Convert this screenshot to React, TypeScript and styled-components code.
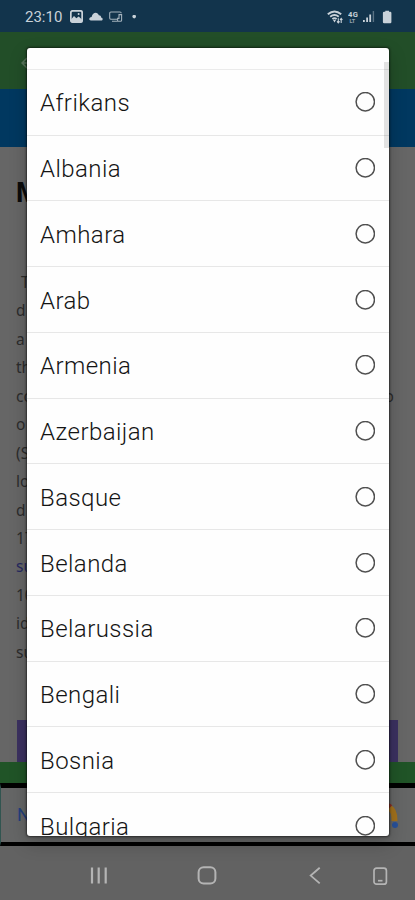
import React from 'react';
import styled, { createGlobalStyle } from 'styled-components';

const GlobalStyle = createGlobalStyle`
  * { box-sizing: border-box; }
  body { margin: 0; background: #666; font-family: Roboto, sans-serif; }
`;

const Screen = styled.div`
  position: relative;
  width: 415px;
  height: 900px;
  overflow: hidden;
  display: flex;
  flex-direction: column;
  background: #666;
`;

const StatusBar = styled.header`
  flex: none;
  height: 32px;
  padding: 0 21px 0 25px;
  display: flex;
  align-items: center;
  justify-content: space-between;
  background: #12344c;
  color: #c9d2d9;
`;

const StatusGroup = styled.div<{ $gap: number }>`
  display: flex;
  align-items: center;
  gap: ${(p) => p.$gap}px;
  padding-top: 1px;
`;

const Clock = styled.span`
  font-size: 15px;
  line-height: 18px;
  width: 39px;
  white-space: nowrap;
  padding-top: 1px;
`;

const AppBar = styled.div`
  flex: none;
  height: 57px;
  padding: 22px 0 0 21px;
  background: #224e28;
`;

const TabBar = styled.div`
  flex: none;
  height: 58px;
  background: #013860;
`;

const Article = styled.main`
  flex: none;
  height: 573px;
  padding: 29px 16px 0;
  overflow: hidden;
  color: #1d1d1d;
`;

const Heading = styled.h1`
  margin: 0 0 58px;
  font-size: 27px;
  line-height: 34px;
  color: #0b0b0b;
`;

const Line = styled.div<{ $link?: boolean; $indent?: boolean }>`
  display: flex;
  justify-content: space-between;
  height: 28.45px;
  padding-left: ${(p) => (p.$indent ? 5 : 0)}px;
  padding-right: 5px;
  font: 15.5px/28.45px 'Noto Sans', sans-serif;
  color: ${(p) => (p.$link ? '#252960' : '#2c2c2c')};
`;

const Banner = styled.div`
  flex: none;
  height: 42px;
  margin: 0 17px;
  background: #3b3160;
`;

const Strip = styled.div`
  flex: none;
  height: 21px;
  background: #205427;
`;

const Ad = styled.div`
  flex: none;
  height: 63px;
  padding: 0 16px 0 16px;
  display: flex;
  align-items: center;
  justify-content: space-between;
  border-top: 5px solid #000;
  border-bottom: 4px solid #000;
  background: #656666;
  border-left: 1px solid #315550;
  color: #243f7c;
  font-size: 18.5px;
`;

const NavBar = styled.nav`
  flex: none;
  height: 54px;
  padding: 5px 27px 0 89px;
  display: flex;
  align-items: center;
  background: #626262;
  color: #b4b4b4;
  svg { display: block; }
`;

const NavSlot = styled.div<{ $width: number }>`
  width: ${(p) => p.$width}px;
  flex: none;
`;

const Dialog = styled.section`
  position: absolute;
  left: 27px;
  top: 48px;
  width: 362px;
  height: 788px;
  overflow: hidden;
  border-radius: 3px;
  background: #fefefe;
  box-shadow: 0 0 2px 1px rgba(0, 0, 0, 0.5), 0 7px 18px rgba(0, 0, 0, 0.23);
`;

const ListTop = styled.div`
  height: 21.9px;
  border-bottom: 1.5px solid #ebebeb;
`;

const Option = styled.label`
  height: 65.75px;
  padding: 0 14px 0 13px;
  display: flex;
  align-items: center;
  justify-content: space-between;
  border-bottom: 1.5px solid #e7e7e7;
  color: #141414;
  font-size: 24px;
  font-weight: 350;
  line-height: 30px;
  letter-spacing: 0.45px;
`;

const OptionName = styled.span`
  padding-top: 2px;
`;

const Radio = styled.svg`
  display: block;
  width: 20px;
  height: 20px;
  fill: none;
  stroke: #505050;
  stroke-width: 1.5;
`;

const ScrollThumb = styled.div`
  position: absolute;
  right: 0;
  top: 14px;
  width: 5px;
  height: 86px;
  background: rgba(0, 0, 0, 0.11);
`;

const languages = ['Afrikans', 'Albania', 'Amhara', 'Arab', 'Armenia', 'Azerbaijan', 'Basque', 'Belanda', 'Belarussia', 'Bengali', 'Bosnia', 'Bulgaria'];
const lines = ['T', 'd', 'a', 'th', 'co', 'o', '(S', 'lo', 'd', '17', 'su', '10', 'id', 'su'];

export default function App() {
  return (
    <>
      <GlobalStyle />
      <Screen>
        <StatusBar>
          <StatusGroup $gap={6}>
            <Clock>23:10</Clock>
            <svg width="13" height="13" viewBox="0 0 13 13">
              <rect x=".8" y=".8" width="11.4" height="11.4" rx="2" fill="#12344c" stroke="currentColor" strokeWidth="1.8" />
              <path d="M1 9.5 4 6l2.4 2.2L8.6 6.5 12 9.5V12H1z" fill="currentColor" />
              <circle cx="8.6" cy="4" r="1" fill="currentColor" />
            </svg>
            <svg width="14" height="9" viewBox="0 0 14 9">
              <path d="M1.9 8.6C-.6 8.6-.2 5.1 2.6 5 3.8-.4 8.9-.2 9.8 3.3c2 0 2.3 1.3 2.3 2.2 2.1.3 2 3.1 0 3.1z" fill="currentColor" />
            </svg>
            <svg width="14" height="12" viewBox="0 0 14 12" fill="none" stroke="currentColor" strokeWidth="1.1" opacity=".8">
              <path d="M8 8.2H1.8A1.2 1.2 0 0 1 .7 7V2.2A1.2 1.2 0 0 1 1.9 1H11a1.2 1.2 0 0 1 1.2 1.2M3 10.2h5" />
              <path d="M10 3.6h2.6v5.6q0 1-1 1H8.6V7.4H10z" />
            </svg>
            <svg width="14" height="4" viewBox="0 0 14 4">
              <circle cx="5.2" cy="1.6" r="1.8" fill="currentColor" />
            </svg>
          </StatusGroup>
          <StatusGroup $gap={5}>
            <svg width="16" height="14" viewBox="0 0 16 14" fill="none" stroke="currentColor" strokeWidth="1.9">
              <path d="M.8 4.3Q7.5-1.3 14.2 4.3M3.2 6.8q4.3-3.4 8.6 0M5.4 9q2.1-1.7 4.2 0" />
              <path d="m7.5 12.4-1.5-2.3h3z" fill="currentColor" stroke="none" />
              <path d="M11.3 8.3v4.5M10 11.4l1.3 1.5 1.3-1.5M14.2 13V8.6M13 10l1.2-1.5L15.4 10" strokeWidth="1.1" />
            </svg>
            <svg width="10" height="14" viewBox="0 0 10 14" fill="currentColor" fontFamily="Roboto" fontWeight="700">
              <text x="0" y="6.7" fontSize="7.6" textLength="10">4G</text>
              <text x="1.5" y="13" fontSize="5.5" opacity=".7">LT</text>
            </svg>
            <svg width="12" height="13" viewBox="0 0 12 13" fill="currentColor">
              <path d="M0 10h1.8v2H0zM3.2 7.5H5V12H3.2zM6.3 4.5h1.8V12H6.3z" />
              <path d="M9.7 1h1.4v11H9.7z" opacity=".4" />
            </svg>
            <svg width="14" height="14" viewBox="0 0 14 14">
              <path d="M5.3 1.8V.7h3.7v1.1h1.2a1.2 1.2 0 0 1 1.2 1.2v9a1.2 1.2 0 0 1-1.2 1.2H4.1A1.2 1.2 0 0 1 2.9 12V3a1.2 1.2 0 0 1 1.2-1.2z" fill="currentColor" />
            </svg>
          </StatusGroup>
        </StatusBar>
        <AppBar>
          <svg width="16" height="12" viewBox="0 0 16 12" fill="none" stroke="#57745a" strokeWidth="1.5">
            <path d="M6 1 1 6l5 5M1 6h14" />
          </svg>
        </AppBar>
        <TabBar />
        <Article>
          <Heading>M</Heading>
          {lines.map((text, i) => (
            <Line key={i} $link={i === 10} $indent={i === 0}>
              <span>{text}</span>
              {i === 4 && <span>o</span>}
            </Line>
          ))}
        </Article>
        <Banner />
        <Strip />
        <Ad>
          <span>N</span>
          <svg width="26" height="28" viewBox="0 0 26 28" fill="none" strokeWidth="6">
            <path d="M6 20V12a8 8 0 0 1 8-7" stroke="#247443" />
            <path d="M15.5 6.5q6.2 2 6 13.5" stroke="#a2711d" />
            <path d="M13 5q3-.5 4.5 1" stroke="#8d3023" strokeWidth="5" />
            <circle cx="22" cy="24" r="3" fill="#28519a" />
          </svg>
        </Ad>
        <NavBar>
          <NavSlot $width={108}>
            <svg width="20" height="20" viewBox="0 0 20 20" fill="none" stroke="currentColor" strokeWidth="2.2">
              <path d="M3 1.5v16M9.7 1.5v16M16.7 1.5v16" />
            </svg>
          </NavSlot>
          <NavSlot $width={110}>
            <svg width="20" height="20" viewBox="0 0 20 20" fill="none" stroke="currentColor" strokeWidth="2">
              <rect x="1.6" y="1.2" width="16.8" height="16.4" rx="5" />
            </svg>
          </NavSlot>
          <NavSlot $width={65}>
            <svg width="20" height="20" viewBox="0 0 20 20" fill="none" stroke="currentColor" strokeWidth="1.8">
              <path d="m12.7 1.8-9 7.8 9 7.8" />
            </svg>
          </NavSlot>
          <NavSlot $width={18}>
            <svg width="18" height="20" viewBox="0 0 18 20" fill="none" stroke="currentColor" strokeWidth="1.7">
              <rect x="2" y="2.2" width="12.4" height="16" rx="2.5" />
              <path d="M6 14.7h4.5" />
            </svg>
          </NavSlot>
        </NavBar>
        <Dialog role="dialog">
          <ListTop />
          {languages.map((name) => (
            <Option key={name}>
              <OptionName>{name}</OptionName>
              <Radio viewBox="0 0 20 20">
                <circle cx="10.3" cy="9.7" r="9.2" />
              </Radio>
            </Option>
          ))}
          <ScrollThumb />
        </Dialog>
      </Screen>
    </>
  );
}
